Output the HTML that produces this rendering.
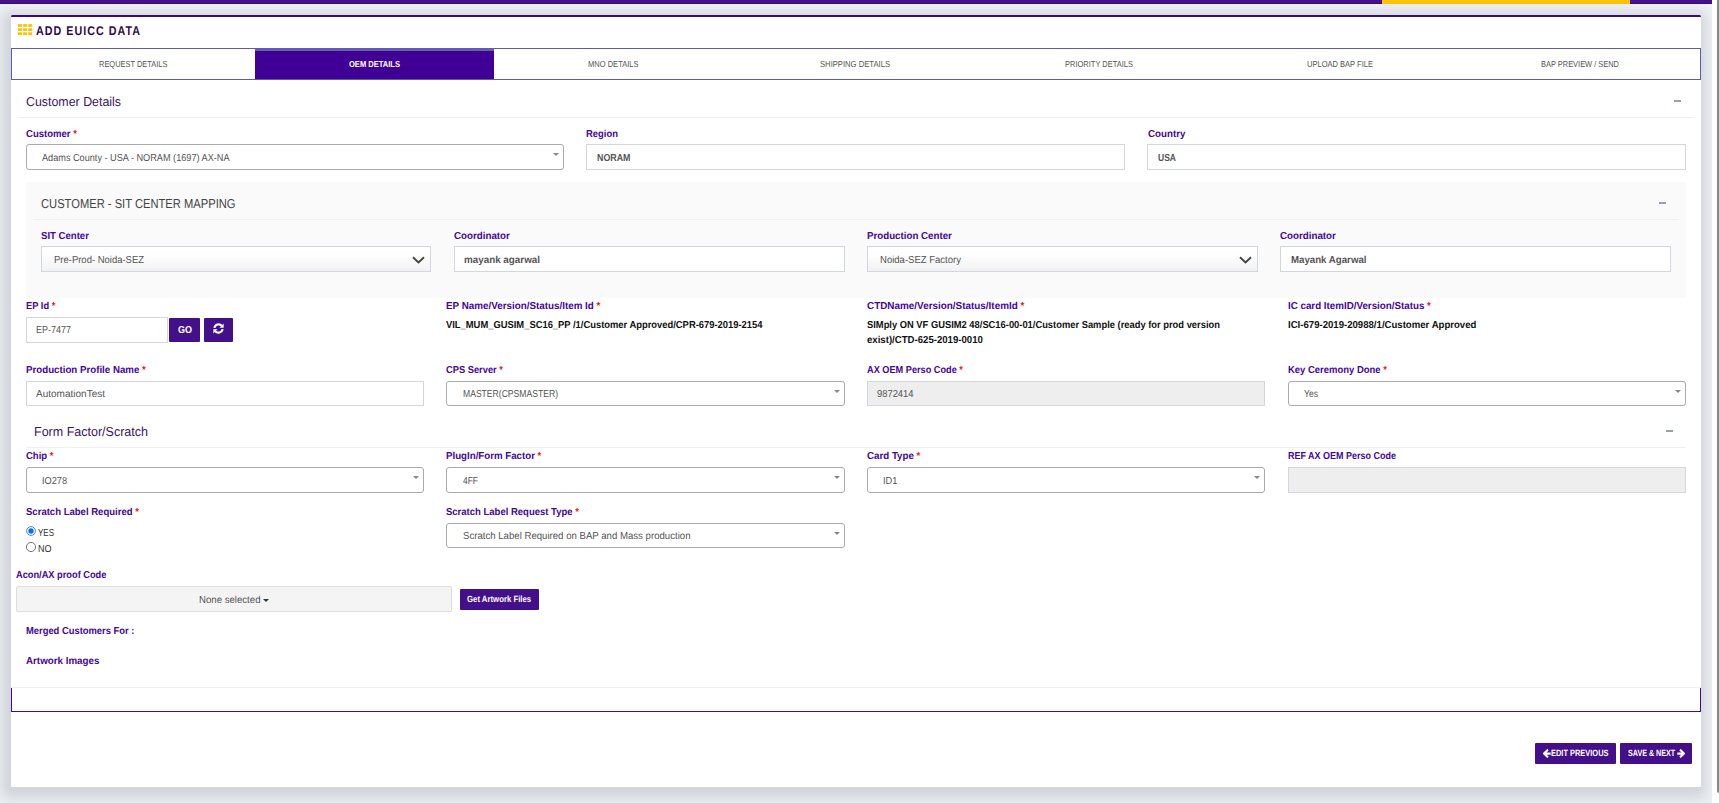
<!DOCTYPE html><html lang="en"><head><meta charset="utf-8"><title>Add EUICC Data</title><style>

*{box-sizing:border-box;margin:0;padding:0}
html,body{width:1719px;height:803px;overflow:hidden}
body{position:relative;background:#ecf0f5;font-family:"Liberation Sans",sans-serif;color:#333;text-rendering:geometricPrecision}
.abs{position:absolute}
.t{position:absolute;white-space:nowrap;line-height:1;transform-origin:0 50%;display:block;font-weight:400;font-style:normal}
/* text classes */
.title{font-size:12.6px;font-weight:700;color:#2d0a4e;letter-spacing:1.2px}
.tab{font-size:8.7px;color:#555}
.tabA{font-size:8.7px;color:#fff;font-weight:700}
.h{font-size:13px;color:#3a1466}
.h2{font-size:13px;color:#444}
.lb{font-size:10.1px;font-weight:700;color:#43069a}
.rq{color:#f00}
.in{font-size:10.1px;color:#555}
.inb{font-size:10.1px;color:#555;font-weight:700}
.val{font-size:10.1px;color:#111;font-weight:700}
.btn{font-size:9px;color:#fff;font-weight:700}
.btn2{font-size:10.1px;color:#fff;font-weight:700}
.rad{font-size:10.1px;color:#333}
/* boxes */
.card{position:absolute;left:11px;top:15px;width:1690px;height:772px;background:#fff;border-top:2.4px solid #3a0880;border-radius:1.5px;box-shadow:-2px 4px 12px 7px rgba(0,0,10,.115)}
.tabs{position:absolute;left:11px;top:48px;width:1690px;height:32px;border:1px solid #5f5aa9}
.tabact{position:absolute;left:255px;top:48px;width:239px;height:31px;background:#400095;border-top:3px solid #6661ad}
.hr{position:absolute;height:1px;background:#f0f0f0}
.sel2{position:absolute;height:26px;background:#fff;border:1px solid #aaa;border-radius:3px}
.sel2:after{content:"";position:absolute;right:4px;top:8px;border:3px solid transparent;border-top:3.5px solid #888;border-bottom:0}
.inp{position:absolute;height:26px;background:#fff;border:1px solid #d2d6de}
.dis{background:#eee}
.selb{position:absolute;height:26px;border:1px solid #d2d6de;background:linear-gradient(#fff 0%,#fdfdfd 35%,#f2f2f2 100%)}
.panel{position:absolute;left:26px;top:182px;width:1660px;height:116px;background:#fafafa}
.pbtn{position:absolute;background:#44108a;border-radius:1px}
.minus{position:absolute;width:7px;height:2px;background:#97a0b3}


</style></head><body>
<div class="abs" style="left:0;top:0;width:1712px;height:803px;background:#ecf0f5"></div>
<div class="card"></div>
<div class="abs" style="left:0;top:0;width:1712px;height:3.8px;background:#441187;border-bottom:1.1px solid #3a0880"></div>
<div class="abs" style="left:1382px;top:0;width:248px;height:3.8px;background:#ffc107"></div>
<div class="abs" style="left:1712px;top:0;width:7px;height:803px;background:#fff"></div>
<div class="abs" style="left:1717.2px;top:0;width:2px;height:793px;background:#888;border-radius:0 0 0 2px"></div>
<svg class="abs" style="left:18px;top:24px" width="15" height="12" viewBox="0 0 15 12"><g fill="#ffc107"><rect x="0.0" y="0.1" width="4" height="2.8"/><rect x="5.1" y="0.1" width="4" height="2.8"/><rect x="10.2" y="0.1" width="4" height="2.8"/><rect x="0.0" y="4.2" width="4" height="2.8"/><rect x="5.1" y="4.2" width="4" height="2.8"/><rect x="10.2" y="4.2" width="4" height="2.8"/><rect x="0.0" y="8.3" width="4" height="2.8"/><rect x="5.1" y="8.3" width="4" height="2.8"/><rect x="10.2" y="8.3" width="4" height="2.8"/></g></svg>
<div class="tabact"></div><div class="tabs"></div>
<div class="abs" style="left:11px;top:688px;width:1690px;height:24px;border:1px solid #43089c;border-top:0"></div>
<div class="hr" style="left:18px;top:117px;width:1676px"></div>
<div class="minus" style="left:1674px;top:100px"></div>
<div class="sel2" style="left:26px;top:144px;width:538px"></div>
<div class="inp" style="left:586px;top:144px;width:539px"></div>
<div class="inp" style="left:1147px;top:144px;width:539px"></div>
<div class="panel"></div>
<div class="hr" style="left:33px;top:219px;width:1646px;background:#f0f0f0"></div>
<div class="minus" style="left:1659px;top:202px"></div>
<div class="selb" style="left:41px;top:246px;width:390px"><svg class="abs" style="right:5px;top:9px" width="13" height="8" viewBox="0 0 13 8"><path d="M1 1.2 L6.5 6.4 L12 1.2" fill="none" stroke="#444" stroke-width="1.9"/></svg></div>
<div class="inp" style="left:454px;top:246px;width:391px"></div>
<div class="selb" style="left:867px;top:246px;width:391px"><svg class="abs" style="right:5px;top:9px" width="13" height="8" viewBox="0 0 13 8"><path d="M1 1.2 L6.5 6.4 L12 1.2" fill="none" stroke="#444" stroke-width="1.9"/></svg></div>
<div class="inp" style="left:1280px;top:246px;width:391px"></div>
<div class="inp" style="left:26px;top:317px;width:142px"></div>
<div class="pbtn" style="left:169px;top:318px;width:31px;height:24px"></div>
<div class="pbtn" style="left:204px;top:318px;width:29px;height:24px"></div>
<svg class="abs" style="left:213px;top:323px" width="11" height="11" viewBox="0 0 12 12"><g fill="none" stroke="#fff" stroke-width="2.3"><path d="M1.5 5.3 A4.6 4.6 0 0 1 9.6 3.2"/><path d="M10.5 6.7 A4.6 4.6 0 0 1 2.4 8.8"/></g><path d="M11.6 0.6 V5.1 H7.1 Z" fill="#fff"/><path d="M0.4 11.4 V6.9 H4.9 Z" fill="#fff"/></svg>
<div class="inp" style="left:26px;top:381px;width:398px;height:25px"></div>
<div class="sel2" style="left:446px;top:381px;width:399px;height:25px"></div>
<div class="inp dis" style="left:867px;top:381px;width:398px;height:25px"></div>
<div class="sel2" style="left:1288px;top:381px;width:398px;height:25px"></div>
<div class="hr" style="left:26px;top:447px;width:1660px"></div>
<div class="minus" style="left:1666px;top:430px"></div>
<div class="sel2" style="left:26px;top:467px;width:398px;height:25.5px"></div>
<div class="sel2" style="left:446px;top:467px;width:399px;height:25.5px"></div>
<div class="sel2" style="left:867px;top:467px;width:398px;height:25.5px"></div>
<div class="inp dis" style="left:1288px;top:467px;width:398px;height:25.5px"></div>
<svg class="abs" style="left:25px;top:524.6px" width="12" height="12" viewBox="0 0 12 12"><circle cx="6" cy="6" r="4.4" fill="#fff" stroke="#2b7de9" stroke-width="0.9"/><circle cx="6" cy="6" r="2.7" fill="#0f6fe6"/></svg>
<svg class="abs" style="left:25px;top:541px" width="12" height="12" viewBox="0 0 12 12"><circle cx="6" cy="6" r="4.6" fill="#fff" stroke="#767676" stroke-width="1"/></svg>
<div class="sel2" style="left:446px;top:523px;width:399px;height:25px"></div>
<div class="abs" style="left:16px;top:586px;width:436px;height:26px;background:#f4f4f4;border:1px solid #ddd;border-radius:2px"></div>
<div class="abs" style="left:263px;top:599px;border:3px solid transparent;border-top:3.5px solid #333;border-bottom:0"></div>
<div class="pbtn" style="left:460px;top:589px;width:79px;height:21px"></div>
<div class="hr" style="left:11px;top:687px;width:1690px"></div>
<div class="pbtn" style="left:1535px;top:743px;width:81px;height:21px"></div>
<div class="pbtn" style="left:1620px;top:743px;width:72px;height:21px"></div>
<svg class="abs" style="left:1543px;top:749px" width="8" height="9" viewBox="0 0 12 12" preserveAspectRatio="none"><path d="M7.5 1 L1.5 6 L7.5 11 M1.5 6 H11.5" fill="none" stroke="#fff" stroke-width="3"/></svg>
<svg class="abs" style="left:1677px;top:749px" width="8" height="9" viewBox="0 0 12 12" preserveAspectRatio="none"><path d="M4.5 1 L10.5 6 L4.5 11 M10.5 6 H0.5" fill="none" stroke="#fff" stroke-width="3"/></svg>
<h1 class="t title" style="left:36px;top:25px;transform:scaleX(0.8519)">ADD EUICC DATA</h1>
<a class="t tab" style="left:99px;top:60px;transform:scaleX(0.8581)">REQUEST DETAILS</a>
<a class="t tabA" style="left:349px;top:60px;transform:scaleX(0.8683)">OEM DETAILS</a>
<a class="t tab" style="left:588px;top:60px;transform:scaleX(0.8670)">MNO DETAILS</a>
<a class="t tab" style="left:820px;top:60px;transform:scaleX(0.8805)">SHIPPING DETAILS</a>
<a class="t tab" style="left:1064.5px;top:60px;transform:scaleX(0.8623)">PRIORITY DETAILS</a>
<a class="t tab" style="left:1306.5px;top:60px;transform:scaleX(0.8668)">UPLOAD BAP FILE</a>
<a class="t tab" style="left:1540.5px;top:60px;transform:scaleX(0.8563)">BAP PREVIEW / SEND</a>
<h3 class="t h" style="left:26px;top:95px;transform:scaleX(0.9528)">Customer Details</h3>
<label class="t lb" style="left:25.5px;top:130px;transform:scaleX(0.9451)">Customer <span class="rq">*</span></label>
<label class="t lb" style="left:586px;top:130px;transform:scaleX(0.9322)">Region</label>
<label class="t lb" style="left:1147.5px;top:130px;transform:scaleX(0.9663)">Country</label>
<span class="t in" style="left:42px;top:154px;transform:scaleX(0.9058)">Adams County - USA - NORAM (1697) AX-NA</span>
<span class="t inb" style="left:596.5px;top:154px;transform:scaleX(0.8783)">NORAM</span>
<span class="t inb" style="left:1158px;top:154px;transform:scaleX(0.8446)">USA</span>
<h3 class="t h2" style="left:41px;top:197px;transform:scaleX(0.8594)">CUSTOMER - SIT CENTER MAPPING</h3>
<label class="t lb" style="left:40.5px;top:232px;transform:scaleX(0.9488)">SIT Center</label>
<label class="t lb" style="left:453.5px;top:232px;transform:scaleX(0.9677)">Coordinator</label>
<label class="t lb" style="left:866.5px;top:232px;transform:scaleX(0.9643)">Production Center</label>
<label class="t lb" style="left:1280px;top:232px;transform:scaleX(0.9677)">Coordinator</label>
<span class="t in" style="left:54px;top:256px;transform:scaleX(0.9383)">Pre-Prod- Noida-SEZ</span>
<span class="t inb" style="left:464px;top:256px;transform:scaleX(0.9744)">mayank agarwal</span>
<span class="t in" style="left:880px;top:256px;transform:scaleX(0.9437)">Noida-SEZ Factory</span>
<span class="t inb" style="left:1291px;top:256px;transform:scaleX(0.9589)">Mayank Agarwal</span>
<label class="t lb" style="left:25.5px;top:302px;transform:scaleX(0.9242)">EP Id <span class="rq">*</span></label>
<label class="t lb" style="left:446px;top:302px;transform:scaleX(0.9737)">EP Name/Version/Status/Item Id <span class="rq">*</span></label>
<label class="t lb" style="left:866.5px;top:302px;transform:scaleX(0.9811)">CTDName/Version/Status/ItemId <span class="rq">*</span></label>
<label class="t lb" style="left:1287.6px;top:302px;transform:scaleX(0.9685)">IC card ItemID/Version/Status <span class="rq">*</span></label>
<span class="t in" style="left:36px;top:326px;transform:scaleX(0.8910)">EP-7477</span>
<b class="t btn2" style="left:177.8px;top:326px;transform:scaleX(0.8915)">GO</b>
<span class="t val" style="left:446px;top:321px;transform:scaleX(0.9292)">VIL_MUM_GUSIM_SC16_PP /1/Customer Approved/CPR-679-2019-2154</span>
<span class="t val" style="left:866.5px;top:321px;transform:scaleX(0.9266)">SIMply ON VF GUSIM2 48/SC16-00-01/Customer Sample (ready for prod version</span>
<span class="t val" style="left:866.5px;top:336px;transform:scaleX(0.9518)">exist)/CTD-625-2019-0010</span>
<span class="t val" style="left:1287.6px;top:321px;transform:scaleX(0.9505)">ICI-679-2019-20988/1/Customer Approved</span>
<label class="t lb" style="left:25.5px;top:366px;transform:scaleX(0.9628)">Production Profile Name <span class="rq">*</span></label>
<label class="t lb" style="left:446px;top:366px;transform:scaleX(0.9217)">CPS Server <span class="rq">*</span></label>
<label class="t lb" style="left:866.5px;top:366px;transform:scaleX(0.9093)">AX OEM Perso Code <span class="rq">*</span></label>
<label class="t lb" style="left:1288px;top:366px;transform:scaleX(0.9377)">Key Ceremony Done <span class="rq">*</span></label>
<span class="t in" style="left:36px;top:390px;transform:scaleX(0.9917)">AutomationTest</span>
<span class="t in" style="left:462.5px;top:390px;transform:scaleX(0.8512)">MASTER(CPSMASTER)</span>
<span class="t in" style="left:877px;top:390px;transform:scaleX(0.9288)">9872414</span>
<span class="t in" style="left:1304px;top:390px;transform:scaleX(0.8501)">Yes</span>
<h3 class="t h" style="left:33.5px;top:425px;transform:scaleX(0.9623)">Form Factor/Scratch</h3>
<label class="t lb" style="left:25.5px;top:452px;transform:scaleX(0.9393)">Chip <span class="rq">*</span></label>
<label class="t lb" style="left:446px;top:452px;transform:scaleX(0.9609)">PlugIn/Form Factor <span class="rq">*</span></label>
<label class="t lb" style="left:866.5px;top:452px;transform:scaleX(0.9646)">Card Type <span class="rq">*</span></label>
<label class="t lb" style="left:1288px;top:452px;transform:scaleX(0.8892)">REF AX OEM Perso Code</label>
<span class="t in" style="left:42px;top:477px;transform:scaleX(0.9091)">IO278</span>
<span class="t in" style="left:462.5px;top:477px;transform:scaleX(0.8355)">4FF</span>
<span class="t in" style="left:883px;top:477px;transform:scaleX(0.9225)">ID1</span>
<label class="t lb" style="left:25.5px;top:508px;transform:scaleX(0.9448)">Scratch Label Required <span class="rq">*</span></label>
<label class="t lb" style="left:446px;top:508px;transform:scaleX(0.9413)">Scratch Label Request Type <span class="rq">*</span></label>
<span class="t rad" style="left:37.5px;top:529px;transform:scaleX(0.7920)">YES</span>
<span class="t rad" style="left:37.5px;top:545px;transform:scaleX(0.8916)">NO</span>
<span class="t in" style="left:462.5px;top:532px;transform:scaleX(0.9524)">Scratch Label Required on BAP and Mass production</span>
<label class="t lb" style="left:15.5px;top:571px;transform:scaleX(0.9159)">Acon/AX proof Code</label>
<span class="t in" style="left:199px;top:596px;transform:scaleX(0.9530)">None selected</span>
<b class="t btn" style="left:467px;top:595px;transform:scaleX(0.8654)">Get Artwork Files</b>
<label class="t lb" style="left:25.5px;top:627px;transform:scaleX(0.9292)">Merged Customers For :</label>
<label class="t lb" style="left:25.5px;top:657px;transform:scaleX(0.9692)">Artwork Images</label>
<b class="t btn" style="left:1550.7px;top:749px;transform:scaleX(0.8272)">EDIT PREVIOUS</b>
<b class="t btn" style="left:1627.6px;top:749px;transform:scaleX(0.7954)">SAVE &amp; NEXT</b>
</body></html>
